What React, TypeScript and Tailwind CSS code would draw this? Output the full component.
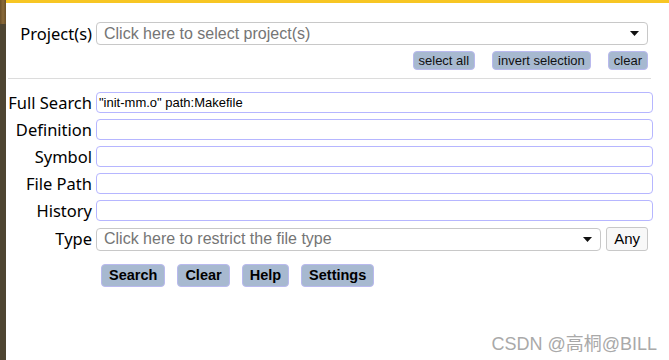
const fields = ["Full Search", "Definition", "Symbol", "File Path", "History"];

function Caret() {
  return (
    <svg width="9" height="5" viewBox="0 0 9 5" className="shrink-0">
      <path d="M0 0h9L4.5 5z" fill="#111" />
    </svg>
  );
}

export default function App() {
  const values: Record<string, string> = { "Full Search": '"init-mm.o" path:Makefile' };

  return (
    <div className="flex h-[360px] w-[669px] bg-white font-['Liberation_Sans',Arial,sans-serif]">
      <div className="flex w-[6px] flex-col">
        <div className="h-[24px] bg-[linear-gradient(90deg,#6b5028,#8a6a3a_50%,#6b5028)]" />
        <div className="flex-1 bg-[#4e4532]" />
      </div>

      <div className="relative flex-1 border-t-[3px] border-[#f7c623] pr-[16px]">
        {/* project picker */}
        <div className="mt-[19px] grid grid-cols-[86px_1fr] items-center gap-x-[4px]">
          <label className="text-right font-['Noto_Sans',sans-serif] text-[16.5px] leading-[23px] text-black">Project(s)</label>
          <div className="mr-[5px] flex h-[23px] items-center rounded-[4px] border border-[#c8c8c8] pl-[7px] pr-[8px]">
            <span className="flex-1 text-[16px] text-[#757575]">Click here to select project(s)</span>
            <Caret />
          </div>
        </div>

        <div className="mt-[6px] flex justify-end gap-[17px] pr-[5px]">
          <button className="h-[19px] rounded-[4px] border border-[#b9b9ee] bg-[#a7b9d0] px-[5px] text-[13px] leading-none text-[#111]">
            select all
          </button>
          <button className="h-[19px] rounded-[4px] border border-[#b9b9ee] bg-[#a7b9d0] px-[5px] text-[13px] leading-none text-[#111]">
            invert selection
          </button>
          <button className="h-[19px] rounded-[4px] border border-[#b9b9ee] bg-[#a7b9d0] px-[5px] text-[13px] leading-none text-[#111]">
            clear
          </button>
        </div>

        <div className="ml-[2px] mr-[2px] mt-[8px] h-px bg-[#dcdcdc]" />

        {/* search fields */}
        <div className="mt-[13px] grid grid-cols-[86px_1fr] items-center gap-x-[4px] gap-y-[6px]">
          {fields.map((f) => (
            <div key={f} className="contents">
              <label className="text-right font-['Noto_Sans',sans-serif] text-[16.5px] leading-[21px] text-black">{f}</label>
              <div className="flex h-[21px] items-center rounded-[4px] border border-[#b6b6ff] px-[2px] text-[13px] text-black">
                {values[f] ?? ""}
              </div>
            </div>
          ))}

          <label className="text-right font-['Noto_Sans',sans-serif] text-[16.5px] leading-[22px] text-black">Type</label>
          <div className="flex items-center gap-[5px] pr-[5px]">
            <div className="flex h-[23px] flex-1 items-center rounded-[4px] border border-[#c8c8c8] pl-[7px] pr-[8px]">
              <span className="flex-1 text-[16px] text-[#757575]">Click here to restrict the file type</span>
              <Caret />
            </div>
            <button className="h-[24px] rounded-[3px] border border-[#c8c8c8] bg-[#f8f8f8] px-[7px] text-[15px] text-black">
              Any
            </button>
          </div>
        </div>

        <div className="ml-[95px] mt-[13px] flex gap-[12px]">
          {["Search", "Clear", "Help", "Settings"].map((b) => (
            <button
              key={b}
              className="h-[23px] rounded-[4px] border border-[#b9b9ee] bg-[#a7b9d0] px-[7px] text-[14.5px] font-bold leading-none text-black"
            >
              {b}
            </button>
          ))}
        </div>

        <div className="absolute bottom-[7px] right-[12px] font-['Liberation_Sans','Noto_Sans_CJK_SC',sans-serif] text-[18px] leading-none text-[#a9a9a9]">
          CSDN @高桐@BILL
        </div>
      </div>
    </div>
  );
}
